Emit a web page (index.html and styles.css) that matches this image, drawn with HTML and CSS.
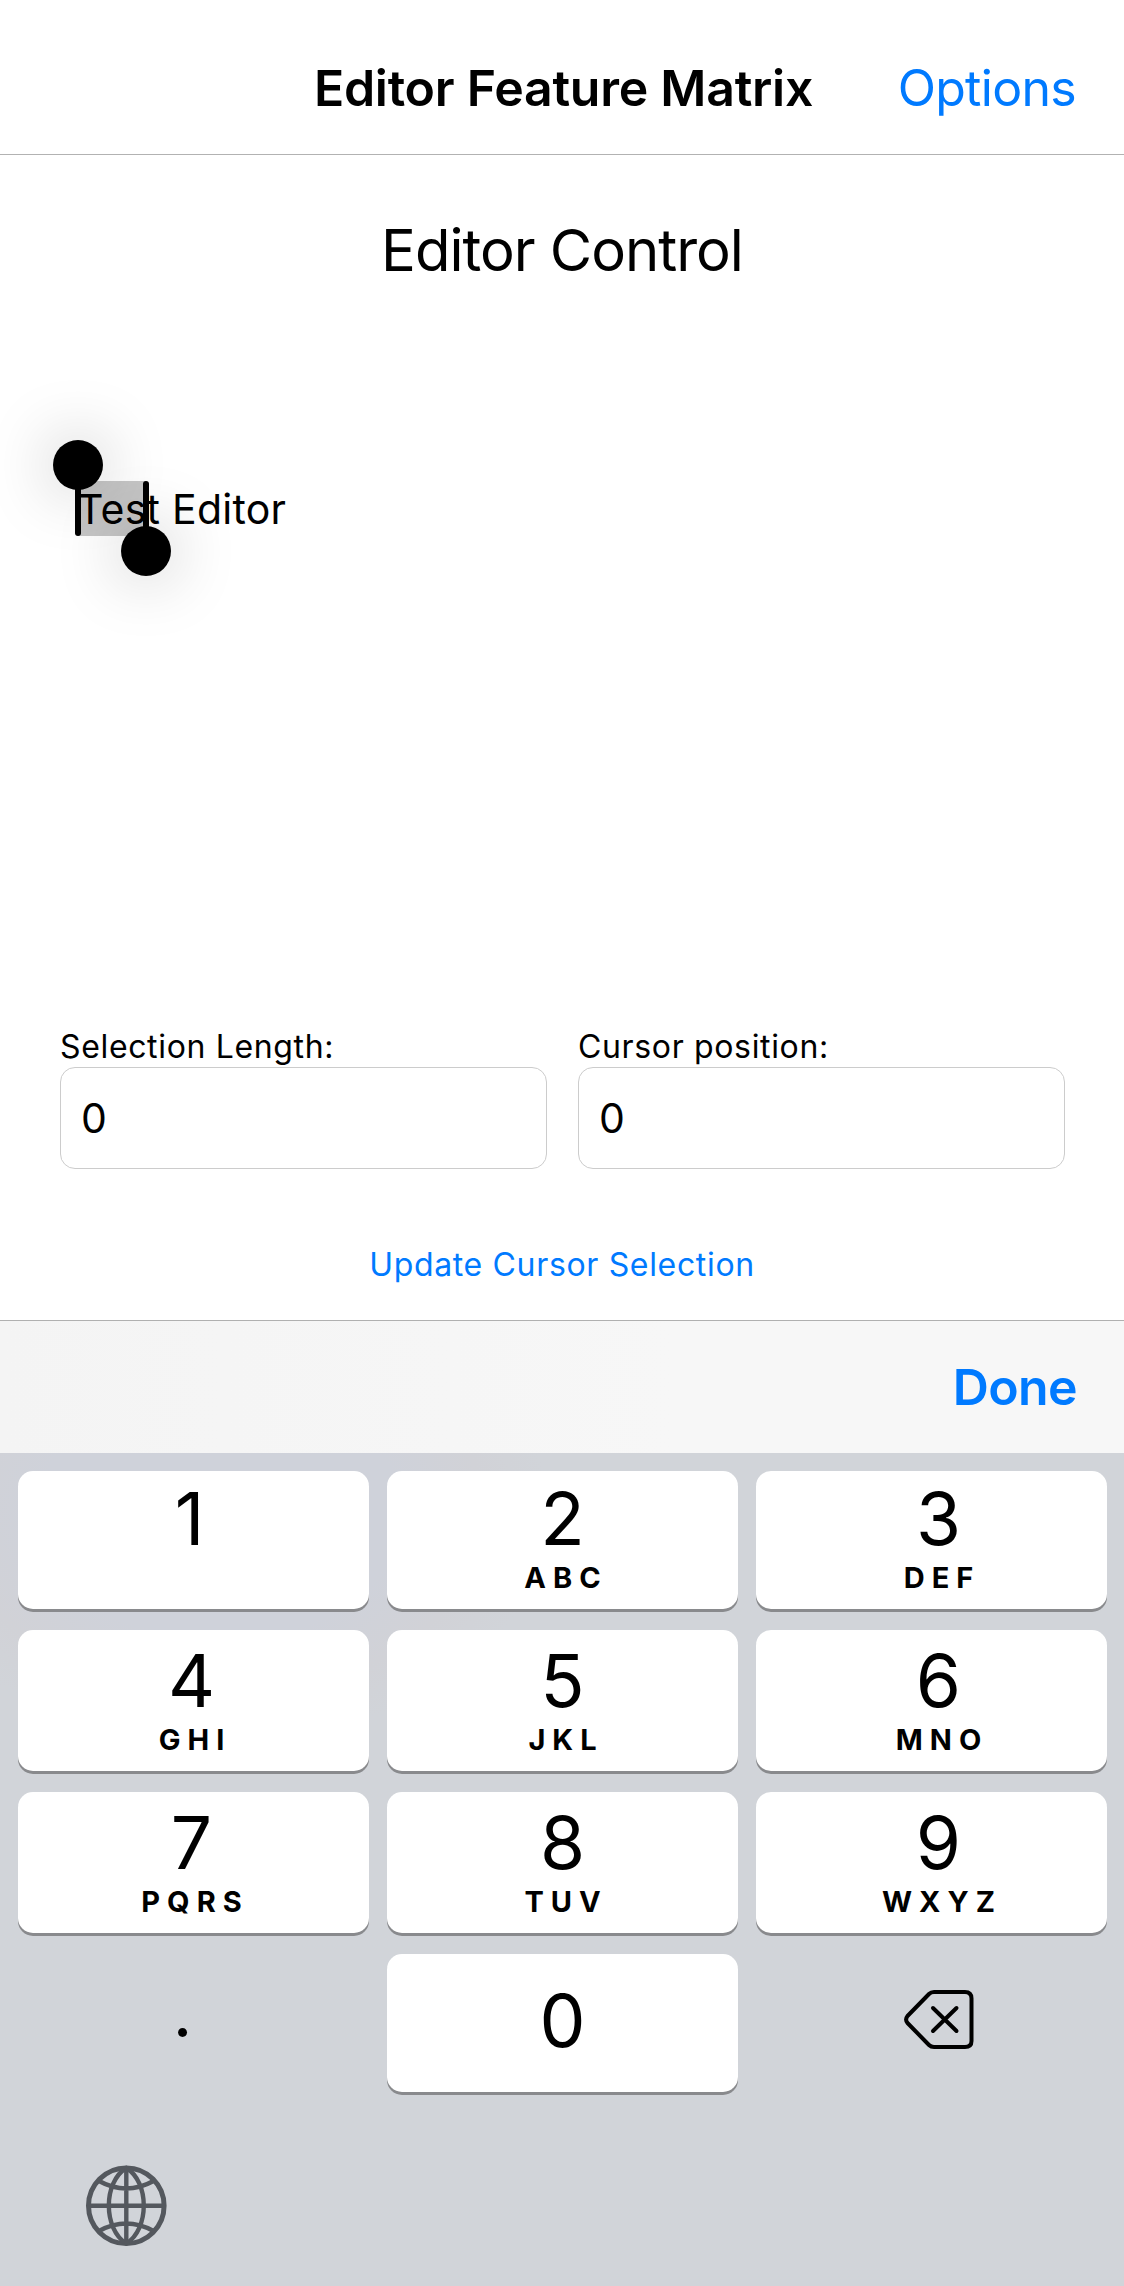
FILE: index.html
```html
<!DOCTYPE html>
<html lang="en">
<head>
<meta charset="utf-8">
<title>Editor Feature Matrix</title>
<link rel="stylesheet" href="styles.css">
</head>
<body>
<header class="navbar">
  <span></span>
  <h1 class="navbar-title">Editor Feature Matrix</h1>
  <a class="navbar-action">Options</a>
</header>
<main class="page">
  <h2 class="heading">Editor Control</h2>
  <div class="editor">
    <span class="editor-text">Test Editor</span>
    <span class="selection"></span>
    <span class="handle handle-start"></span>
    <span class="handle handle-end"></span>
  </div>
  <div class="fields">
    <label class="field"><span class="label">Selection Length:</span><span class="input">0</span></label>
    <label class="field"><span class="label">Cursor position:</span><span class="input">0</span></label>
  </div>
  <a class="update">Update Cursor Selection</a>
</main>
<div class="toolbar"><a class="done">Done</a></div>
<section class="keyboard">
  <div class="keys">
    <div class="key left one"><span class="digit">1</span></div>
    <div class="key"><span class="digit">2</span><span class="letters">ABC</span></div>
    <div class="key right"><span class="digit">3</span><span class="letters">DEF</span></div>
    <div class="key tall left"><span class="digit">4</span><span class="letters">GHI</span></div>
    <div class="key tall"><span class="digit">5</span><span class="letters">JKL</span></div>
    <div class="key tall right"><span class="digit">6</span><span class="letters">MNO</span></div>
    <div class="key tall left"><span class="digit">7</span><span class="letters">PQRS</span></div>
    <div class="key tall"><span class="digit">8</span><span class="letters">TUV</span></div>
    <div class="key tall right"><span class="digit">9</span><span class="letters">WXYZ</span></div>
    <div class="key plain point"><span class="dot">.</span></div>
    <div class="key zero"><span class="digit">0</span></div>
    <div class="key plain erase">
      <svg width="70" height="60" viewBox="0 0 70 60" fill="none" stroke="#000" stroke-width="4" stroke-linecap="round" stroke-linejoin="round">
        <path d="M30 2H61Q67.5 2 67.5 8.500V51Q67.500 57 61 57H30Q27 57 25 55L3.500 33Q0.700 29.500 3.500 26L25 4Q27 2 30 2Z"/>
        <path d="M29 18L52.500 41M52.500 18L29 41"/>
      </svg>
    </div>
  </div>
  <div class="bottom">
    <svg width="82" height="82" viewBox="0 0 82 82" fill="none" stroke="#54585e" stroke-width="4.400">
      <circle cx="41.300" cy="40.700" r="37.800" stroke-width="5"/>
      <path d="M41.300 3C18 17 18 64 41.300 78.500C64.600 64 64.600 17 41.300 3Z"/>
      <path d="M41.300 3V78.500M3 40.700H79M14 16Q41.300 31 68.500 16M14 66Q41.300 51 68.500 66"/>
    </svg>
  </div>
</section>
</body>
</html>
```
FILE: styles.css
```css
* { box-sizing: border-box; }
body {
  margin: 0;
  width: 1124px;
  height: 2286px;
  display: flex;
  flex-direction: column;
  overflow: hidden;
  background: #fff;
  color: #000;
  font-family: Inter, "Liberation Sans", sans-serif;
}
h1, h2 { margin: 0; }
a { color: #007aff; }
.navbar {
  height: 155px;
  display: grid;
  grid-template-columns: 1fr auto 1fr;
  align-items: start;
  padding: 58px 48px 0;
  border-bottom: 1px solid #b2b2b2;
  font-size: 50px;
  line-height: 60px;
}
.navbar-title { padding-left: 3px; font-size: 50px; font-weight: 600; letter-spacing: -0.26px; }
.navbar-action { justify-self: end; letter-spacing: -0.7px; }
.page { height: 1165px; display: flex; flex-direction: column; }
.heading {
  padding-top: 60px;
  font-size: 58px;
  line-height: 70px;
  font-weight: 400;
  letter-spacing: -1px;
  text-align: center;
}
.editor { position: relative; height: 670px; padding: 199px 0 0 77px; }
.editor-text {
  position: relative;
  z-index: 2;
  display: block;
  font-size: 41px;
  line-height: 50px;
  letter-spacing: 0.25px;
}
.selection {
  position: absolute;
  z-index: 1;
  left: 78px;
  top: 196px;
  width: 68px;
  height: 55px;
  background: rgba(0, 0, 0, 0.22);
}
.handle {
  position: absolute;
  z-index: 3;
  width: 6px;
  height: 55px;
  border-radius: 3px;
  background: #000;
}
.handle::after {
  content: "";
  position: absolute;
  left: -22px;
  width: 50px;
  height: 50px;
  border-radius: 50%;
  background: #000;
  box-shadow: 0 0 66px rgba(0, 0, 0, 0.28);
}
.handle-start { left: 75px; top: 196px; }
.handle-start::after { top: -41px; }
.handle-end { left: 143px; top: 196px; }
.handle-end::after { bottom: -40px; }
.fields { display: grid; grid-template-columns: 487px 487px; gap: 31px; padding: 71px 60px 0; }
.field { display: flex; flex-direction: column; }
.label { font-size: 32px; line-height: 42px; letter-spacing: 0.65px; }
.input {
  height: 102px;
  margin-top: -1px;
  padding: 28px 20px 0;
  border: 1px solid #ccc;
  border-radius: 15px;
  font-size: 41px;
  line-height: 44px;
}
.update {
  margin-top: 76px;
  text-align: center;
  font-size: 32px;
  line-height: 40px;
  letter-spacing: 0.66px;
}
.toolbar {
  height: 133px;
  padding: 36px 47px 0;
  border-top: 1px solid #b0b0b0;
  background: linear-gradient(90deg, #f4f4f4, #f7f7f7 60%);
  font-size: 50px;
  line-height: 60px;
  font-weight: 600;
  letter-spacing: -0.6px;
  text-align: right;
}
.keyboard {
  flex: 1;
  padding: 18px 17px 0 18px;
  background: radial-gradient(ellipse 330px 230px at 220px 60px, #cfd2da 55%, #d1d2d7 80%, #d1d4d9 100%) #d1d4d9;
}
.keys {
  display: grid;
  grid-template-columns: repeat(3, 351px);
  grid-template-rows: 138px 141px 141px 138px;
  gap: 21px 18px;
}
.key {
  display: flex;
  flex-direction: column;
  align-items: center;
  padding-top: 11px;
  border-radius: 15px;
  background: #fff;
  box-shadow: 0 3px 0 #898a8d;
}
.left { padding-right: 4px; }
.one { padding-right: 8px; }
.right { padding-left: 14px; }
.tall { padding-top: 14px; }
.zero { padding-top: 30px; }
.plain { background: none; box-shadow: none; }
.digit { font-size: 73px; line-height: 73px; }
.letters {
  margin-top: 8px;
  margin-right: -7px;
  font-size: 29px;
  line-height: 29px;
  font-weight: 700;
  letter-spacing: 7px;
}
.point { padding: 22px 22px 0 0; }
.dot { font-size: 68px; line-height: 73px; }
.erase { padding: 36px 0 0 14px; }
.bottom { padding: 73px 0 0 67px; }
.bottom svg { display: block; }
```
